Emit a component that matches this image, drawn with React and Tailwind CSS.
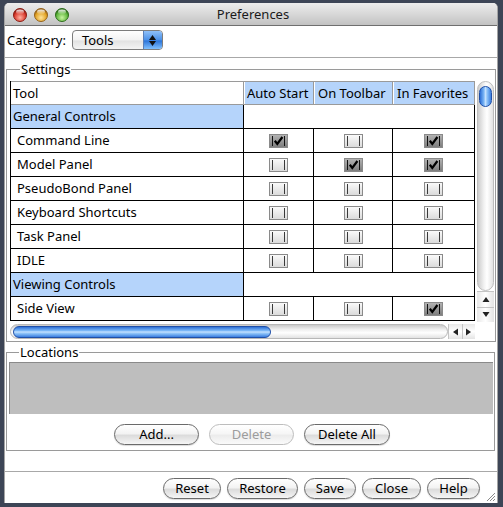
import React from "react";

const FONT = { fontFamily: '"Noto Sans", "DejaVu Sans", sans-serif' };

const rows = [
  { cat: "General Controls" },
  { name: "Command Line", v: [1, 0, 1] },
  { name: "Model Panel", v: [0, 1, 1] },
  { name: "PseudoBond Panel", v: [0, 0, 0] },
  { name: "Keyboard Shortcuts", v: [0, 0, 0] },
  { name: "Task Panel", v: [0, 0, 0] },
  { name: "IDLE", v: [0, 0, 0] },
  { cat: "Viewing Controls" },
  { name: "Side View", v: [0, 0, 1] },
];

const colW = ["w-[70px]", "w-[79px]", "w-[82px]"];

function Check({ checked }) {
  return (
    <svg width="19" height="14" viewBox="0 0 19 14">
      <defs>
        <linearGradient id="cu" x1="0" y1="0" x2="0" y2="1">
          <stop offset="0" stopColor="#fbfbfb" />
          <stop offset="1" stopColor="#dadada" />
        </linearGradient>
        <linearGradient id="cc" x1="0" y1="0" x2="0" y2="1">
          <stop offset="0" stopColor="#b4b4b4" />
          <stop offset="1" stopColor="#7c7c7c" />
        </linearGradient>
      </defs>
      <rect x="0.5" y="0.5" width="18" height="13" fill={checked ? "url(#cc)" : "url(#cu)"} stroke="#8a8a8a" />
      <line x1="3.5" y1="2" x2="3.5" y2="12" stroke={checked ? "#111" : "#3a3a3a"} />
      <line x1="15.5" y1="2" x2="15.5" y2="12" stroke={checked ? "#111" : "#3a3a3a"} />
      {checked && (
        <path d="M5.8 6.8 L8.3 10 L13.4 3" fill="none" stroke="#000" strokeWidth="2.2" />
      )}
    </svg>
  );
}

function Light({ c1, c2, c3, id }) {
  return (
    <svg width="14" height="14" viewBox="0 0 14 14">
      <defs>
        <radialGradient id={id} cx="0.5" cy="0.7" r="0.6">
          <stop offset="0" stopColor={c1} />
          <stop offset="0.75" stopColor={c2} />
          <stop offset="1" stopColor={c3} />
        </radialGradient>
        <linearGradient id={id + "h"} x1="0" y1="0" x2="0" y2="1">
          <stop offset="0" stopColor="#fff" stopOpacity="0.9" />
          <stop offset="1" stopColor="#fff" stopOpacity="0" />
        </linearGradient>
      </defs>
      <circle cx="7" cy="7" r="6.5" fill={`url(#${id})`} stroke={c3} />
      <ellipse cx="7" cy="4" rx="4" ry="2.4" fill={`url(#${id}h)`} />
    </svg>
  );
}

function Btn({ children, w, disabled }) {
  return (
    <div
      className={`${w} h-[21px] rounded-full border flex items-center justify-center text-[13px] leading-none ${
        disabled
          ? "border-[#bdbdbd] text-[#9c9c9c] bg-[linear-gradient(to_bottom,#ffffff,#f6f6f6_45%,#ececec_55%,#fafafa)]"
          : "border-[#6a6a6a] text-black bg-[linear-gradient(to_bottom,#ffffff,#f3f3f3_45%,#dcdcdc_55%,#f5f5f5)] shadow-[0_1px_1px_rgba(0,0,0,0.15)]"
      }`}
    >
      {children}
    </div>
  );
}

function Arrow({ dir }) {
  const d = {
    up: "M0.5 6 L4 1 L7.5 6 Z",
    down: "M0.5 1 L4 6 L7.5 1 Z",
    left: "M6 0.5 L1 4 L6 7.5 Z",
    right: "M1 0.5 L6 4 L1 7.5 Z",
  }[dir];
  return (
    <svg width="8" height="8" viewBox="0 0 8 8">
      <path d={d} fill="#222" />
    </svg>
  );
}

export default function App() {
  return (
    <div className="w-[503px] h-[507px] bg-[#3d4556] pt-[3px] pl-[4px]" style={FONT}>
      <div className="relative w-[494px] h-[500px] bg-white rounded-t-[5px] border-l border-r border-[#a4a4a4] flex flex-col overflow-hidden">
        {/* Title bar */}
        <div className="h-[23px] shrink-0 border-b border-[#6f6f6f] bg-[linear-gradient(to_bottom,#ececec,#d8d8d8_50%,#c2c2c2)] flex items-center relative">
          <div className="flex gap-[7px] pl-[8px] pt-[2px]">
            <Light id="lr" c1="#ffb0a0" c2="#d8382b" c3="#8c1d14" />
            <Light id="ly" c1="#ffe49a" c2="#e0a020" c3="#96631a" />
            <Light id="lg" c1="#c8f5a0" c2="#5cb43a" c3="#2e6e1c" />
          </div>
          <div className="absolute inset-0 flex items-center justify-center text-[13px] text-[#1a1a1a] pt-[1px] pl-[4px]">
            Preferences
          </div>
        </div>

        {/* Category row */}
        <div className="h-[31px] shrink-0 flex items-start pt-[4px] pl-[2px]">
          <span className="text-[13px] leading-[20px] text-black mr-[6px]">Category:</span>
          <div className="w-[91px] h-[20px] rounded-[4px] border border-[#7d7d7d] flex overflow-hidden bg-[linear-gradient(to_bottom,#ffffff,#f2f2f2_50%,#e2e2e2_55%,#f4f4f4)]">
            <div className="flex-1 text-[13px] leading-[18px] pl-[9px] text-black">Tools</div>
            <div className="w-[19px] border-l border-[#5a7fb8] bg-[linear-gradient(to_bottom,#8fc0f8,#4a90e8_50%,#2c74d8_55%,#7fc0ff)] flex flex-col items-center justify-center gap-[1px]">
              <svg width="7" height="5" viewBox="0 0 7 5"><path d="M0 5 L3.5 0 L7 5 Z" fill="#111" /></svg>
              <svg width="7" height="5" viewBox="0 0 7 5"><path d="M0 0 L3.5 5 L7 0 Z" fill="#111" /></svg>
            </div>
          </div>
        </div>
        <div className="h-px shrink-0 bg-[#a8a8a8]" />

        {/* Settings */}
        <fieldset className="mt-[4px] ml-[1px] w-[490px] border border-[#9a9a9a] pl-[3px] pt-[4px] pb-[2px] shrink-0">
          <legend className="ml-[10px] px-[1px] text-[13px] leading-[15px] text-black">Settings</legend>
          <div className="flex">
            <div className="flex flex-col">
              <div className="w-[465px] border-l border-[#000]">
                {/* header */}
                <div className="flex h-[24px] border-t border-b border-[#9a9a9a]">
                  <div className="w-[233px] border-r border-[#9a9a9a] bg-white text-[13px] leading-[22px] pl-[2px]">Tool</div>
                  <div className="w-[70px] border-r border-[#9a9a9a] bg-[#b5d4fb] shadow-[inset_1px_0_0_#fff] text-[13px] leading-[22px] pl-[3px] whitespace-nowrap">Auto Start</div>
                  <div className="w-[79px] border-r border-[#9a9a9a] bg-[#b5d4fb] shadow-[inset_1px_0_0_#fff] text-[13px] leading-[22px] pl-[4px] whitespace-nowrap">On Toolbar</div>
                  <div className="w-[82px] border-r border-[#9a9a9a] bg-[#b5d4fb] shadow-[inset_1px_0_0_#fff] text-[13px] leading-[22px] pl-[4px] whitespace-nowrap">In Favorites</div>
                </div>
                {rows.map((r, i) =>
                  r.cat ? (
                    <div key={i} className="flex h-[24px] border-b border-black">
                      <div className="w-[233px] bg-[#b5d4fb] border-r border-black text-[13px] leading-[23px] pl-[2px]">{r.cat}</div>
                      <div className="flex-1 border-r border-black bg-white" />
                    </div>
                  ) : (
                    <div key={i} className="flex h-[24px] border-b border-black">
                      <div className="w-[233px] border-r border-black text-[13px] leading-[23px] pl-[6px]">{r.name}</div>
                      {r.v.map((c, j) => (
                        <div key={j} className={`${colW[j]} border-r border-black flex items-center justify-center`}>
                          <Check checked={!!c} />
                        </div>
                      ))}
                    </div>
                  )
                )}
              </div>
              {/* horizontal scrollbar */}
              <div className="mt-[3px] w-[465px] h-[15px] flex">
                <div className="flex-1 rounded-full border border-[#b8b8b8] bg-[linear-gradient(to_bottom,#c9c9c9,#efefef_35%,#ffffff_60%,#e2e2e2)] pl-[2px] flex items-center">
                  <div className="w-[258px] h-[12px] rounded-full border border-[#1f4fa8] bg-[linear-gradient(to_bottom,#2d6fd6,#7ab6f6_35%,#c4e1ff_50%,#8cc2f8_65%,#3a7ee0)]" />
                </div>
                <div className="w-[14px] flex items-center justify-center border-l border-[#c4c4c4] bg-[linear-gradient(to_bottom,#e8e8e8,#ffffff_50%,#e4e4e4)]">
                  <Arrow dir="left" />
                </div>
                <div className="w-[13px] flex items-center justify-center border-l border-[#c4c4c4] bg-[linear-gradient(to_bottom,#e8e8e8,#ffffff_50%,#e4e4e4)]">
                  <Arrow dir="right" />
                </div>
              </div>
            </div>
            {/* vertical scrollbar */}
            <div className="ml-[2px] w-[17px] h-[241px] flex flex-col">
              <div className="flex-1 rounded-b-full rounded-t-full border border-[#bdbdbd] bg-[linear-gradient(to_right,#cdcdcd,#f2f2f2_40%,#ffffff_60%,#e2e2e2)] pt-[4px] flex flex-col items-center">
                <div className="w-[13px] h-[21px] rounded-full border border-[#1f4fa8] bg-[linear-gradient(to_right,#2d6fd6,#7ab6f6_35%,#c4e1ff_50%,#8cc2f8_65%,#3a7ee0)]" />
              </div>
              <div className="h-[16px] flex items-center justify-center border-t border-[#c4c4c4] bg-[linear-gradient(to_right,#e8e8e8,#ffffff_50%,#e4e4e4)]">
                <Arrow dir="up" />
              </div>
              <div className="h-[15px] flex items-center justify-center border-t border-[#c4c4c4] bg-[linear-gradient(to_right,#e8e8e8,#ffffff_50%,#e4e4e4)]">
                <Arrow dir="down" />
              </div>
            </div>
          </div>
        </fieldset>

        {/* Locations */}
        <fieldset className="mt-[3px] ml-[1px] w-[489px] border border-[#9a9a9a] pl-[2px] pr-[1px] pt-[2px] pb-[5px] shrink-0">
          <legend className="ml-[10px] px-[1px] text-[13px] leading-[15px] text-black">Locations</legend>
          <div className="h-[52px] bg-[#bebebe] border-t border-l border-[#8a8a8a]" />
          <div className="mt-[10px] flex justify-center gap-[10px] pl-[2px]">
            <Btn w="w-[85px]">Add...</Btn>
            <Btn w="w-[85px]" disabled>Delete</Btn>
            <Btn w="w-[86px]">Delete All</Btn>
          </div>
        </fieldset>

        <div className="mt-[20px] h-px shrink-0 bg-[#a8a8a8]" />
        <div className="mt-[6px] flex justify-end gap-[6px] pr-[17px]">
          <Btn w="w-[58px]">Reset</Btn>
          <Btn w="w-[71px]">Restore</Btn>
          <Btn w="w-[52px]">Save</Btn>
          <Btn w="w-[59px]">Close</Btn>
          <Btn w="w-[53px]">Help</Btn>
        </div>

        {/* resize grip */}
        <svg className="absolute right-[1px] bottom-[1px]" width="11" height="11" viewBox="0 0 11 11">
          <path d="M10 2 L2 10 M10 5 L5 10 M10 8 L8 10" stroke="#8a8a8a" strokeWidth="1" />
          <path d="M10 3 L3 10 M10 6 L6 10 M10 9 L9 10" stroke="#ffffff" strokeWidth="1" />
        </svg>
      </div>
    </div>
  );
}
